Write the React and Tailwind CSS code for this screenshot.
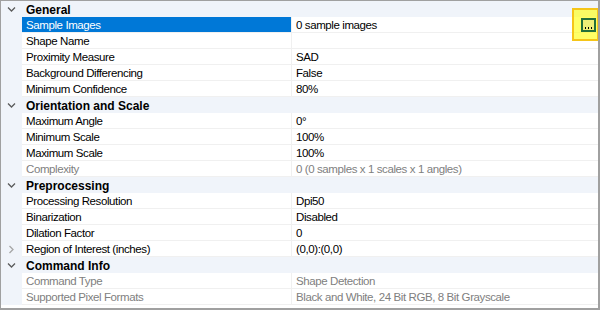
const sections = [
  {
    title: 'General',
    rows: [
      { name: 'Sample Images', value: '0 sample images', selected: true, button: true },
      { name: 'Shape Name', value: '' },
      { name: 'Proximity Measure', value: 'SAD' },
      { name: 'Background Differencing', value: 'False' },
      { name: 'Minimum Confidence', value: '80%' },
    ],
  },
  {
    title: 'Orientation and Scale',
    rows: [
      { name: 'Maximum Angle', value: '0°' },
      { name: 'Minimum Scale', value: '100%' },
      { name: 'Maximum Scale', value: '100%' },
      { name: 'Complexity', value: '0 (0 samples x 1 scales x 1 angles)', disabled: true },
    ],
  },
  {
    title: 'Preprocessing',
    rows: [
      { name: 'Processing Resolution', value: 'Dpi50' },
      { name: 'Binarization', value: 'Disabled' },
      { name: 'Dilation Factor', value: '0' },
      { name: 'Region of Interest (inches)', value: '(0,0):(0,0)', expandable: true },
    ],
  },
  {
    title: 'Command Info',
    rows: [
      { name: 'Command Type', value: 'Shape Detection', disabled: true },
      { name: 'Supported Pixel Formats', value: 'Black and White, 24 Bit RGB, 8 Bit Grayscale', disabled: true },
    ],
  },
]

function Chevron({ open, light }) {
  return (
    <svg width="9" height="9" viewBox="0 0 9 9" className="mx-auto">
      {open ? (
        <path d="M1 2.5 L4.5 6 L8 2.5" fill="none" stroke="#5b5b5b" strokeWidth="1.3" />
      ) : (
        <path d="M2.5 1 L6 4.5 L2.5 8" fill="none" stroke={light ? '#a6a6a6' : '#5b5b5b'} strokeWidth="1.3" />
      )}
    </svg>
  )
}

function EllipsisButton() {
  return (
    <div className="absolute right-[-1px] top-[-9px] w-[27px] h-[33px] bg-[#ffff00]/60 border-2 border-[#f5c518] flex items-start justify-end pt-[8px] pr-[1px]">
      <div className="w-[15px] h-[14px] border-2 border-[#23703a] bg-[#eeee77] flex items-end justify-center gap-[2px] pb-[1px]">
        <span className="w-px h-[2px] bg-black" />
        <span className="w-px h-[2px] bg-black" />
        <span className="w-px h-[2px] bg-black" />
      </div>
    </div>
  )
}

function Row({ row }) {
  const text = row.disabled ? 'text-[#808080]' : 'text-black'
  return (
    <div className="flex h-4">
      <div className="w-[21px] shrink-0 bg-[#f0f4fa] flex items-center">
        {row.expandable && <Chevron light />}
      </div>
      <div className="flex flex-1 border-b border-[#f0f0f0]">
        <div
          className={`w-[270px] shrink-0 pl-[4px] leading-[17px] tracking-[-0.4px] border-r border-[#f0f0f0] ${
            row.selected ? 'bg-[#0078d7] text-white' : text
          }`}
        >
          {row.name}
        </div>
        <div className={`relative flex-1 pl-[4px] leading-[17px] tracking-[-0.4px] ${text}`}>
          {row.value}
          {row.button && <EllipsisButton />}
        </div>
      </div>
    </div>
  )
}

export default function App() {
  return (
    <div
      className="w-[600px] h-[310px] bg-white border-t border-l border-r-2 border-b-2 border-[#a0a0a0] overflow-hidden text-[11.5px]"
      style={{ fontFamily: "'Liberation Sans', Arial, sans-serif" }}
    >
      {sections.map(s => (
        <div key={s.title}>
          <div className="flex h-4 bg-[#f0f4fa]">
            <div className="w-[21px] shrink-0 flex items-center">
              <Chevron open />
            </div>
            <div className="pl-[4px] font-bold text-[12px] leading-[18px] text-black">{s.title}</div>
          </div>
          {s.rows.map(r => (
            <Row key={r.name} row={r} />
          ))}
        </div>
      ))}
    </div>
  )
}
